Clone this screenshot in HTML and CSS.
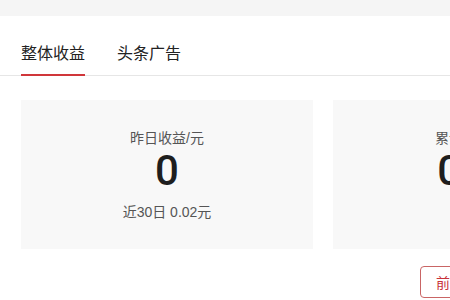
FILE: index.html
```html
<!DOCTYPE html>
<html lang="zh-CN">
<head>
<meta charset="utf-8">
<title>收益</title>
<link rel="stylesheet" href="styles.css">
</head>
<body>
<div class="topbar"></div>
<div class="tabs">
  <div class="tab active">整体收益</div>
  <div class="tab">头条广告</div>
</div>
<div class="content">
  <div class="cards">
    <div class="card">
      <div class="label">昨日收益/元</div>
      <div class="value">0</div>
      <div class="sub">近30日 0.02元</div>
    </div>
    <div class="card">
      <div class="label">累计总收益/元</div>
      <div class="value">0.02</div>
      <div class="sub">&nbsp;</div>
    </div>
  </div>
  <div class="actions">
    <button class="btn">前往提现</button>
  </div>
</div>
</body>
</html>
```
FILE: styles.css
```css
html, body {
  margin: 0;
  padding: 0;
  background: #ffffff;
  overflow: hidden;
  font-family: "Liberation Sans", "Noto Sans CJK SC", sans-serif;
  color: #222;
}
.topbar {
  height: 16px;
  background: #f5f5f5;
}
.tabs {
  display: flex;
  gap: 32px;
  padding-left: 21px;
  border-bottom: 1px solid #e6e6e6;
}
.tab {
  padding-top: 26px;
  padding-bottom: 8px;
  font-size: 16px;
  line-height: 24px;
  color: #222;
  border-bottom: 2px solid transparent;
  margin-bottom: -1px;
  white-space: nowrap;
}
.tab.active {
  border-bottom-color: #d0363a;
}
.content {
  padding: 24px 0 0 21px;
}
.cards {
  display: flex;
  gap: 20px;
}
.card {
  flex: 0 0 292px;
  height: 149px;
  box-sizing: border-box;
  background: #f8f8f8;
  padding-top: 28px;
  text-align: center;
}
.label {
  font-size: 14px;
  line-height: 20px;
  color: #555;
  white-space: nowrap;
}
.value {
  margin-top: 1px;
  font-family: Roboto, "Liberation Sans", sans-serif;
  font-size: 42px;
  line-height: 44px;
  font-weight: 500;
  color: #1e1e1e;
}
.sub {
  margin-top: 9px;
  font-size: 14px;
  line-height: 20px;
  color: #555;
}
.actions {
  display: flex;
  margin-top: 17px;
  padding-left: 399px;
}
.btn {
  flex: none;
  height: 32px;
  padding: 0 15px;
  border: 1px solid #c96565;
  border-radius: 4px;
  background: #fff;
  color: #c8323a;
  font-family: "Liberation Sans", "Noto Sans CJK SC", sans-serif;
  font-size: 14px;
  white-space: nowrap;
}
```
